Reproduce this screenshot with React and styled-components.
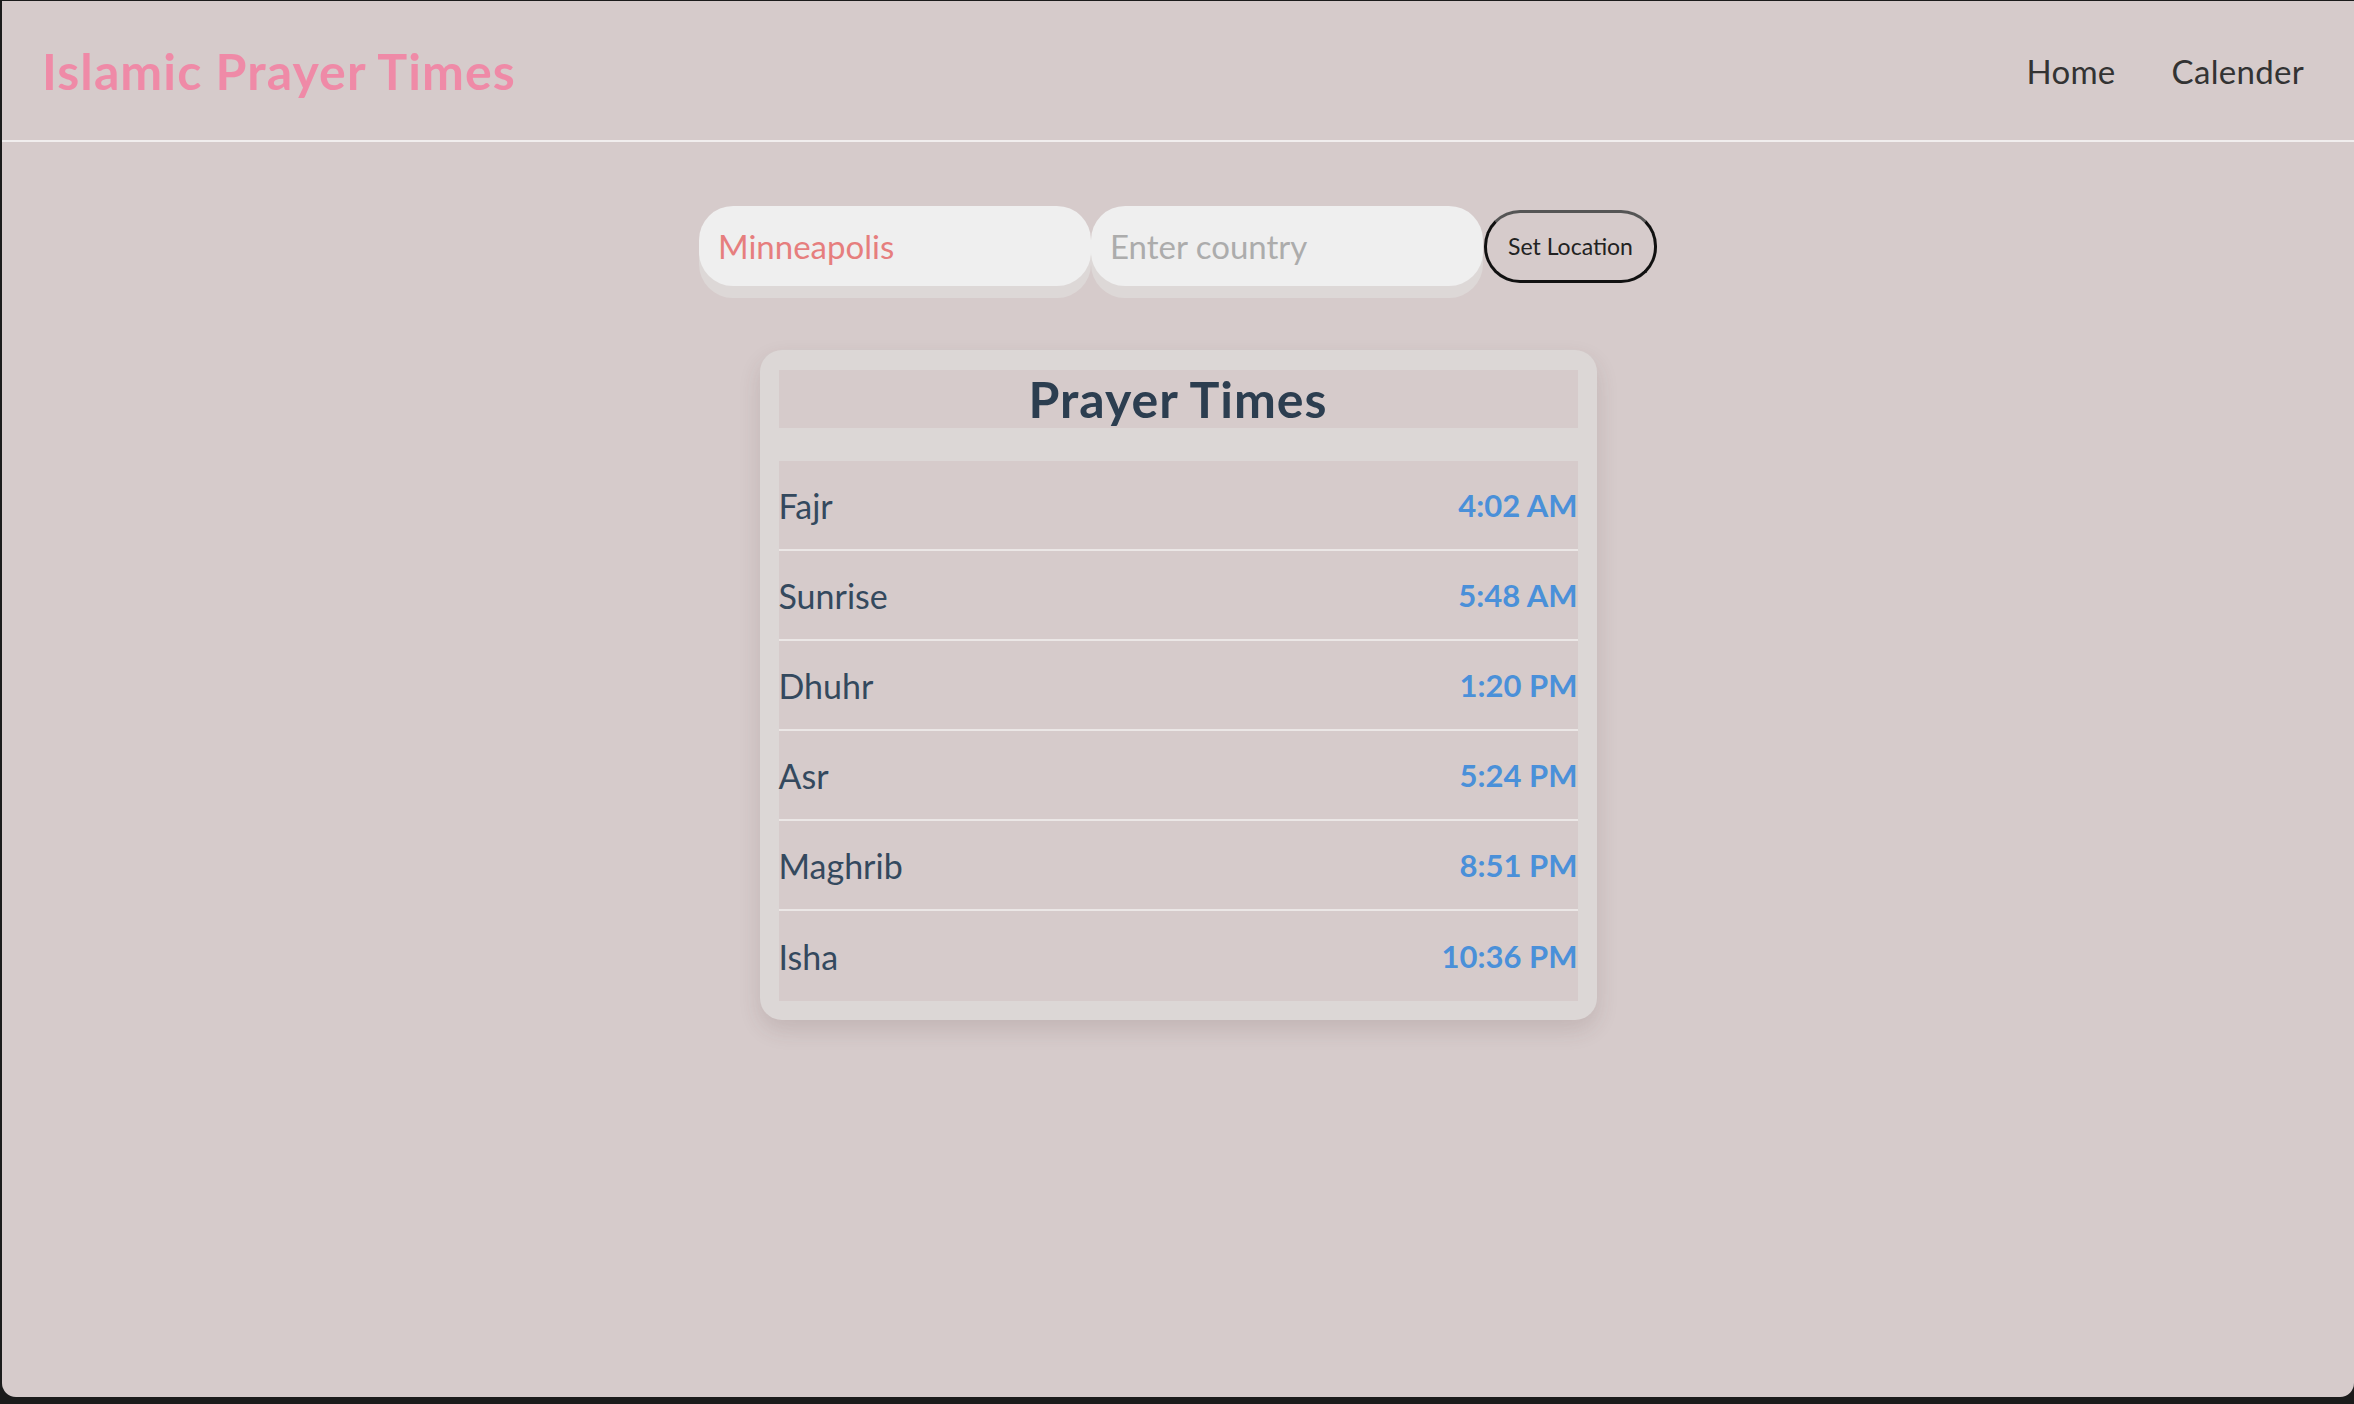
import React, { useState } from "react";
import styled, { createGlobalStyle } from "styled-components";

const GlobalStyle = createGlobalStyle`
  html, body {
    margin: 0;
    padding: 0;
    background: #1b1b1b;
  }
  body {
    font-family: "Lato", "Open Sans", sans-serif;
  }
  * {
    box-sizing: border-box;
  }
`;

const Frame = styled.div`
  height: 1396px;
  margin: 1px 0 0 2px;
  background: #d6cbcb;
  border-radius: 0 0 14px 14px;
  overflow: hidden;
`;

const Navbar = styled.nav`
  display: flex;
  align-items: center;
  justify-content: space-between;
  height: 141px;
  padding: 0 50px 0 40px;
  border-bottom: 2px solid #f1eeee;
`;

const Brand = styled.h1`
  margin: 0;
  font-size: 50px;
  font-weight: 700;
  color: #ef8aa7;
  letter-spacing: 1.1px;
`;

const NavLinks = styled.div`
  display: flex;
  gap: 56px;
`;

const NavLink = styled.a`
  font-size: 33px;
  color: #333;
  text-decoration: none;
  letter-spacing: 0.3px;
`;

const Main = styled.main`
  display: flex;
  flex-direction: column;
  align-items: center;
  padding-top: 64px;
`;

const LocationForm = styled.form`
  display: flex;
  align-items: center;
`;

const TextInput = styled.input`
  width: 392px;
  height: 80px;
  padding: 0 19px;
  border: none;
  border-radius: 34px;
  background: #efefef;
  box-shadow: 0 12px 0 #ddd8d7;
  font-family: inherit;
  font-size: 33px;
  color: ${(p) => (p.$filled ? "#e67e7e" : "#333")};
  outline: none;

  &::placeholder {
    color: #acacac;
  }
`;

const SetButton = styled.button`
  width: 173px;
  height: 73px;
  margin-left: 1px;
  border: 3px solid #111;
  border-top-color: #555;
  border-radius: 36px;
  background: transparent;
  font-family: inherit;
  font-size: 23px;
  color: #222;
`;

const Card = styled.section`
  width: 837px;
  margin-top: 64px;
  padding: 20px 19px 19px;
  background: #dcd7d6;
  border-radius: 22px;
  box-shadow: 0 10px 22px rgba(80, 50, 50, 0.14);
`;

const CardTitle = styled.h2`
  margin: 0 0 33px;
  height: 58px;
  line-height: 58px;
  background: #d6cbcb;
  text-align: center;
  font-size: 50px;
  font-weight: 700;
  letter-spacing: 1px;
  color: #2c3e50;
`;

const TimeList = styled.ul`
  margin: 0;
  padding: 0;
  list-style: none;
`;

const TimeRow = styled.li`
  display: flex;
  align-items: center;
  justify-content: space-between;
  height: 90px;
  background: #d6cbcb;
  border-bottom: ${(p) => (p.$last ? "none" : "2px solid #ebe7e6")};
`;

const PrayerName = styled.span`
  font-size: 34px;
  color: #34495e;
`;

const PrayerTime = styled.span`
  font-size: 31px;
  font-weight: 700;
  color: #4a90d9;
`;

const timings = [
  { name: "Fajr", time: "4:02 AM" },
  { name: "Sunrise", time: "5:48 AM" },
  { name: "Dhuhr", time: "1:20 PM" },
  { name: "Asr", time: "5:24 PM" },
  { name: "Maghrib", time: "8:51 PM" },
  { name: "Isha", time: "10:36 PM" },
];

export default function App() {
  const [city, setCity] = useState("Minneapolis");
  const [country, setCountry] = useState("");

  return (
    <>
      <GlobalStyle />
      <Frame>
        <Navbar>
          <Brand>Islamic Prayer Times</Brand>
          <NavLinks>
            <NavLink href="#">Home</NavLink>
            <NavLink href="#">Calender</NavLink>
          </NavLinks>
        </Navbar>
        <Main>
          <LocationForm onSubmit={(e) => e.preventDefault()}>
            <TextInput
              $filled
              value={city}
              onChange={(e) => setCity(e.target.value)}
              placeholder="Enter city"
            />
            <TextInput
              value={country}
              onChange={(e) => setCountry(e.target.value)}
              placeholder="Enter country"
            />
            <SetButton type="submit">Set Location</SetButton>
          </LocationForm>
          <Card>
            <CardTitle>Prayer Times</CardTitle>
            <TimeList>
              {timings.map((t, i) => (
                <TimeRow key={t.name} $last={i === timings.length - 1}>
                  <PrayerName>{t.name}</PrayerName>
                  <PrayerTime>{t.time}</PrayerTime>
                </TimeRow>
              ))}
            </TimeList>
          </Card>
        </Main>
      </Frame>
    </>
  );
}
